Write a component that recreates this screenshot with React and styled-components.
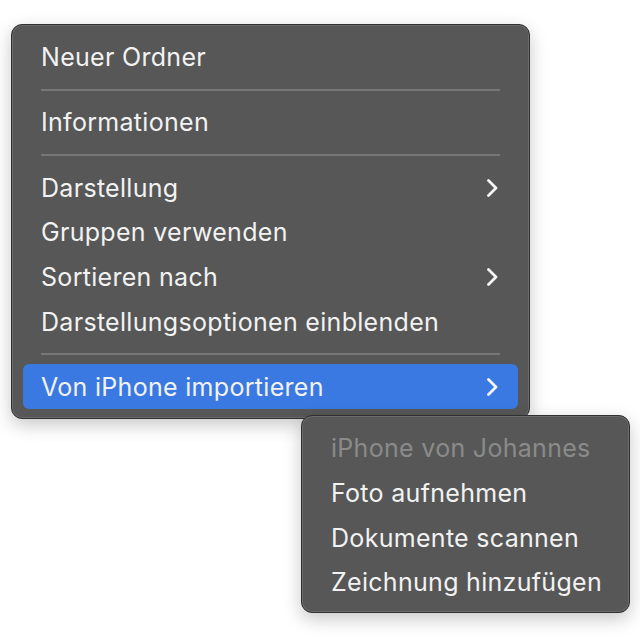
import React from 'react';
import styled, { createGlobalStyle } from 'styled-components';

const GlobalStyle = createGlobalStyle`
  html, body {
    margin: 0;
    padding: 0;
    background: #ffffff;
  }
  body {
    font-family: Inter, "Noto Sans", sans-serif;
    -webkit-font-smoothing: antialiased;
  }
`;

const Page = styled.div`
  width: 640px;
  height: 640px;
  display: grid;
  grid-template-columns: 11px 290px 1fr;
  grid-template-rows: 24px auto 1fr;
`;

const Menu = styled.div`
  box-sizing: border-box;
  width: ${p => p.$width}px;
  padding: 10px 11px 8px;
  background: #565756;
  border-radius: 11px;
  border: 1px solid #2f302f;
  box-shadow: inset 0 0 0 1px #6a6b6a, 0 6px 18px rgba(0, 0, 0, 0.22);
  display: flex;
  flex-direction: column;
`;

const MainMenu = styled(Menu)`
  grid-column: 2 / 4;
  grid-row: 2;
  padding-bottom: 9px;
`;

const SubMenu = styled(Menu)`
  grid-column: 3;
  grid-row: 3;
  align-self: start;
  margin-top: -4px;
  padding-bottom: 7px;
`;

const Row = styled.div`
  height: 44.67px;
  padding: 0 20px 0 18px;
  display: flex;
  align-items: center;
  justify-content: space-between;
  border-radius: 6px;
  font-size: 25px;
  letter-spacing: 0.3px;
  color: ${p => (p.$disabled ? '#8a8b8a' : '#f2f2f2')};
  background: ${p => (p.$active ? '#3a79e1' : 'transparent')};
  white-space: nowrap;
`;

const Separator = styled.div`
  height: 20.5px;
  display: flex;
  align-items: center;
  padding: 0 18px;

  &::after {
    content: '';
    flex: 1;
    height: 2px;
    background: #767776;
  }
`;

function Chevron() {
  return (
    <svg width="12" height="18" viewBox="0 0 12 18" fill="none">
      <path d="M2.5 1.5 L10 9 L2.5 16.5" stroke="#f4f4f4" strokeWidth="2.8" strokeLinecap="round" strokeLinejoin="round" />
    </svg>
  );
}

export default function App() {
  return (
    <Page>
      <GlobalStyle />
      <MainMenu $width={519}>
        <Row>Neuer Ordner</Row>
        <Separator />
        <Row>Informationen</Row>
        <Separator />
        <Row>Darstellung<Chevron /></Row>
        <Row>Gruppen verwenden</Row>
        <Row>Sortieren nach<Chevron /></Row>
        <Row>Darstellungsoptionen einblenden</Row>
        <Separator />
        <Row $active>Von iPhone importieren<Chevron /></Row>
      </MainMenu>
      <SubMenu $width={329}>
        <Row $disabled>iPhone von Johannes</Row>
        <Row>Foto aufnehmen</Row>
        <Row>Dokumente scannen</Row>
        <Row>Zeichnung hinzufügen</Row>
      </SubMenu>
    </Page>
  );
}
